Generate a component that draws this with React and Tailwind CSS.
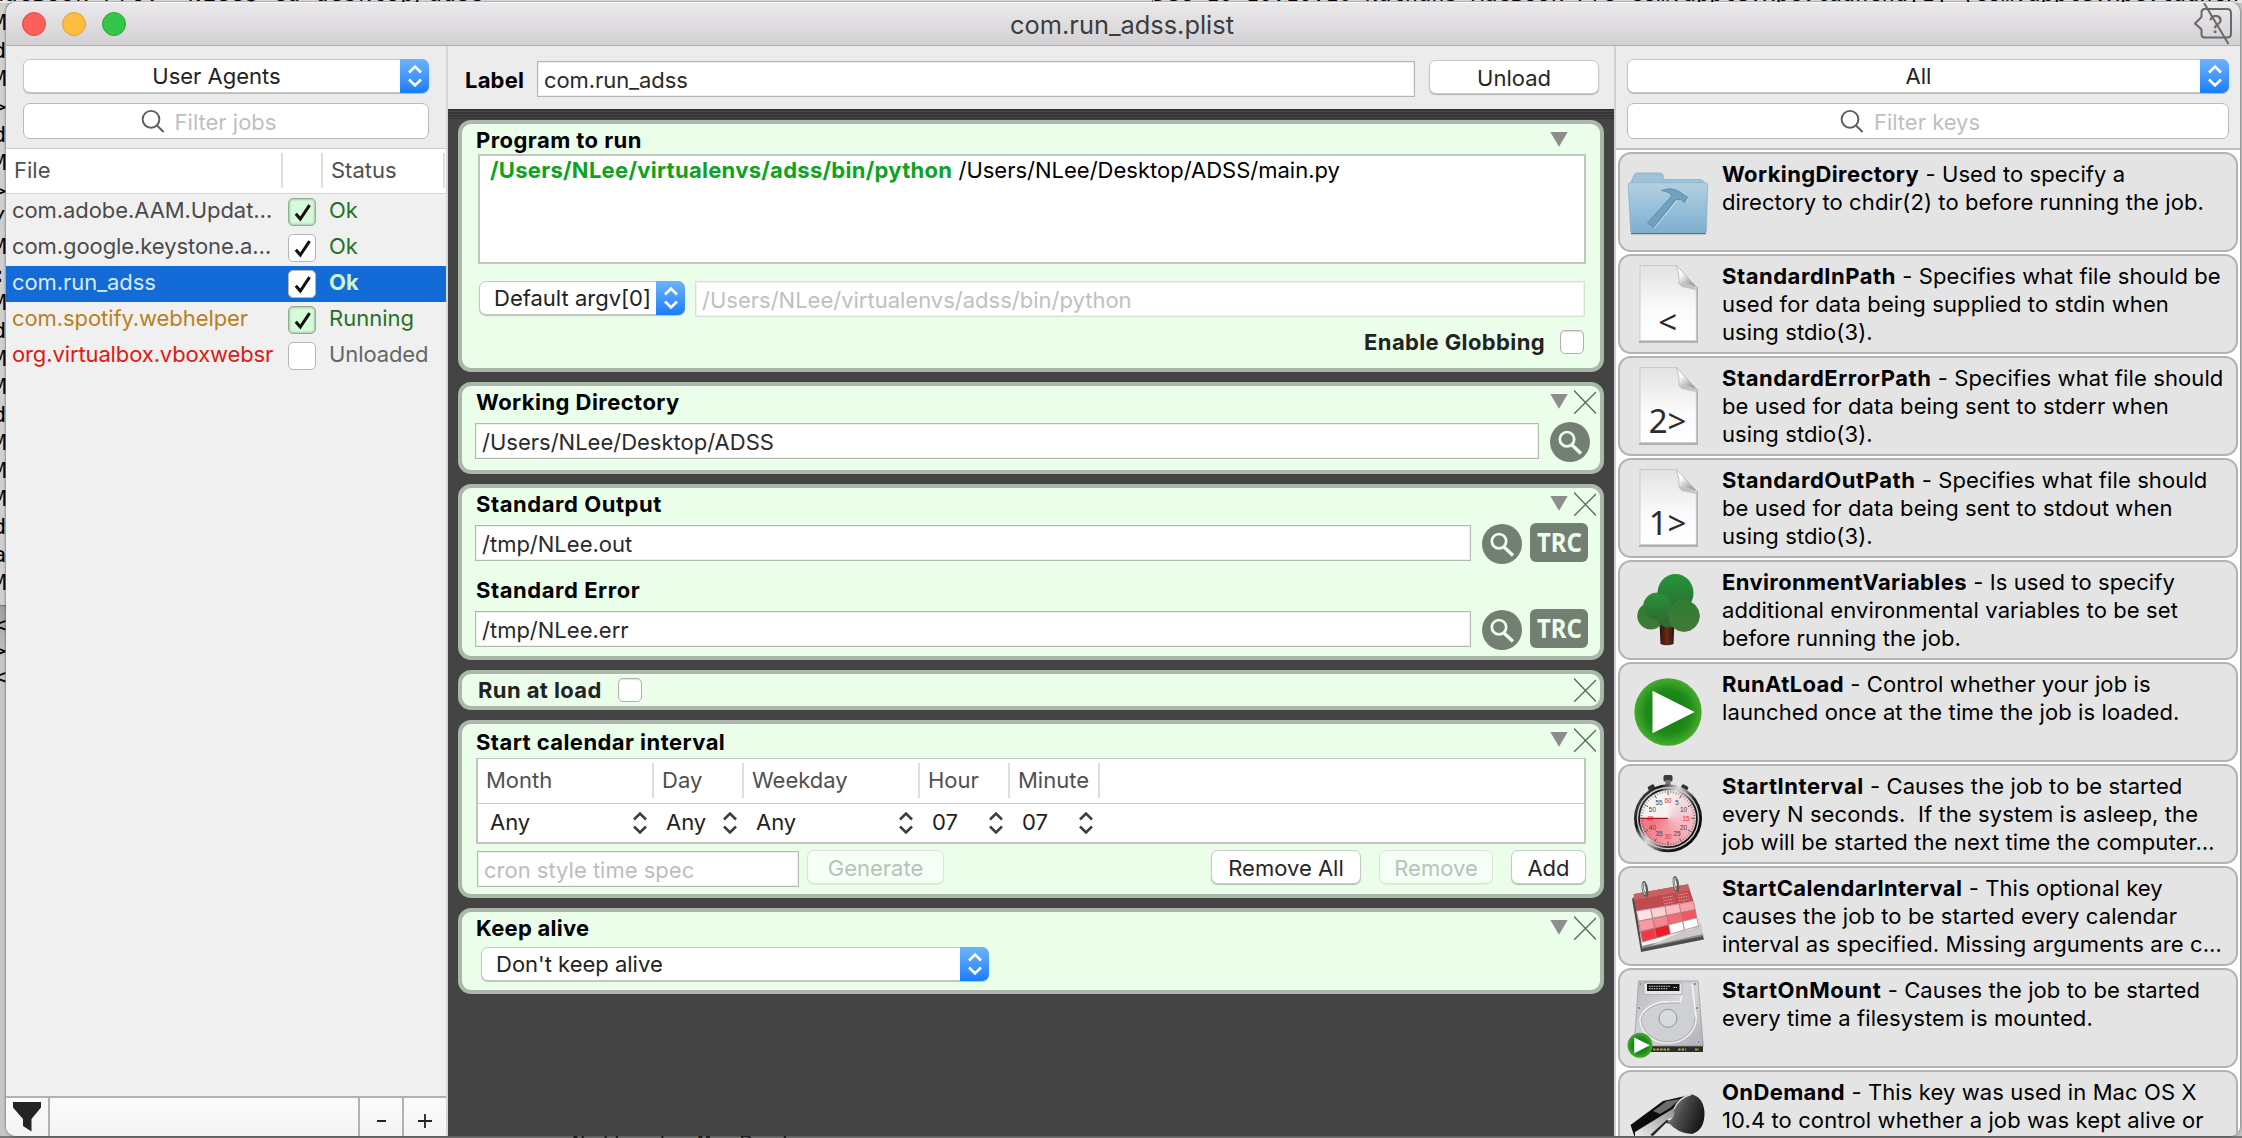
const LEFT_LOG = ['M', 'd', 'M', '>', 'd', 'M', '>', '/', 'M', ':', 'M', 'd', 'M', 'M', 'd', 'M', 'M', 'M', 'd', 'a', 'M', '<', '>', '<'];

const JOBS = [
  { file: 'com.adobe.AAM.Updat…', color: 'text-[#4b4b4b] tracking-[-0.08px]', box: 'green', status: 'Ok', statusColor: 'text-[#1f731f]' },
  { file: 'com.google.keystone.a…', color: 'text-[#4b4b4b] tracking-[-0.08px]', box: 'white', status: 'Ok', statusColor: 'text-[#1f731f]' },
  { file: 'com.run_adss', color: 'text-[#dbe9fa] tracking-[-0.08px]', box: 'white', status: 'Ok', statusColor: 'text-[#cdf5d8] font-bold', selected: true },
  { file: 'com.spotify.webhelper', color: 'text-[#b8801f] tracking-[-0.08px]', box: 'green', status: 'Running', statusColor: 'text-[#1f731f]' },
  { file: 'org.virtualbox.vboxwebsr', color: 'text-[#dd1a12] tracking-[-0.12px]', box: 'empty', status: 'Unloaded', statusColor: 'text-[#666666] tracking-[-0.1px]' },
];

const KEYS = [
  { name: 'WorkingDirectory', icon: 'folder', lines: ['Used to specify a', 'directory to chdir(2) to before running the job.'] },
  { name: 'StandardInPath', icon: 'in', wide: true, lines: ['Specifies what file should be', 'used for data being supplied to stdin when', 'using stdio(3).'] },
  { name: 'StandardErrorPath', icon: 'err', wide: true, lines: ['Specifies what file should', 'be used for data being sent to stderr when', 'using stdio(3).'] },
  { name: 'StandardOutPath', icon: 'out', wide: true, lines: ['Specifies what file should', 'be used for data being sent to stdout when', 'using stdio(3).'] },
  { name: 'EnvironmentVariables', icon: 'tree', lines: ['Is used to specify', 'additional environmental variables to be set', 'before running the job.'] },
  { name: 'RunAtLoad', icon: 'play', lines: ['Control whether your job is', 'launched once at the time the job is loaded.'] },
  { name: 'StartInterval', icon: 'watch', wide: true, lines: ['Causes the job to be started', 'every N seconds.\u00a0 If the system is asleep, the', 'job will be started the next time the computer…'] },
  { name: 'StartCalendarInterval', icon: 'calendar', lines: ['This optional key', 'causes the job to be started every calendar', 'interval as specified. Missing arguments are c…'] },
  { name: 'StartOnMount', icon: 'disk', wide: true, lines: ['Causes the job to be started', 'every time a filesystem is mounted.'] },
  { name: 'OnDemand', icon: 'whistle', lines: ['This key was used in Mac OS X', '10.4 to control whether a job was kept alive or'] },
];

function Arrows({ stroke = '#fff', className = 'w-5 h-[26px]' }) {
  return (
    <svg viewBox="0 0 20 26" className={className} fill="none" stroke={stroke} strokeWidth="2.6">
      <path d="M4 9.5 L10 3.5 L16 9.5 M4 16.5 L10 22.5 L16 16.5" />
    </svg>
  );
}

function Select({ label, className = '', align = 'center', cap = 'w-[29px]' }) {
  return (
    <div className={`flex h-[34px] rounded-[7px] bg-white border border-[#c3c8c3] shadow-[0_1px_1px_rgba(0,0,0,0.22)] ${className}`}>
      <div className={`flex-1 leading-8 whitespace-nowrap ${align === 'center' ? 'text-center pl-2' : 'pl-[14px]'}`}>{label}</div>
      <div className={`-m-px shrink-0 flex items-center justify-center rounded-r-[7px] bg-linear-to-b from-[#6cb3fa] to-[#167dfc] ${cap}`}>
        <Arrows />
      </div>
    </div>
  );
}

function Search({ label, className }) {
  return (
    <div className={`flex items-center justify-center h-9 rounded-[7px] bg-white border border-[#b9b9b9] text-[#bfbfbf] ${className}`}>
      <svg viewBox="0 0 24 24" className="w-6 h-6 mr-2.5" fill="none" stroke="#5c5c5c" strokeWidth="1.9">
        <circle cx="10" cy="10.3" r="8.4" />
        <path d="M16 16.5 L22.6 23" />
      </svg>
      <span className="leading-7 pt-0.5">{label}</span>
    </div>
  );
}

function Field({ value, className = '' }) {
  return (
    <div className={`h-9 shrink-0 bg-white border border-[#b1bcb1] pl-1.5 leading-9 whitespace-nowrap text-[#2a2a2a] shadow-[inset_0_0_0_1px_#f0f0f0] ${className}`}>
      {value}
    </div>
  );
}

function Button({ label, disabled, className }) {
  return (
    <div
      className={`h-[34px] rounded-[7px] border text-center leading-[34px] whitespace-nowrap ${
        disabled
          ? 'bg-[#f5fff5] border-[#d8e4d8] text-[#b9c2b9] shadow-[0_1px_0_rgba(0,0,0,0.06)]'
          : 'bg-white border-[#c6cac6] text-[#262626] shadow-[0_1px_1px_rgba(0,0,0,0.25)]'
      } ${className}`}
    >
      {label}
    </div>
  );
}

function Checkbox() {
  return <div className="w-6 h-6 shrink-0 rounded-[5px] bg-white border border-[#b0b0b0] shadow-[inset_0_1px_1px_rgba(0,0,0,0.12)]" />;
}

function JobCheckbox({ kind }) {
  return (
    <div
      className={`w-7 h-7 rounded-[5px] border ${
        kind === 'green'
          ? 'bg-[#d6fbd8] border-[#8fae92] shadow-[inset_0_0_2px_1px_#a9c8ab]'
          : 'bg-white border-[#b5b5b5]'
      }`}
    >
      {kind !== 'empty' && (
        <svg viewBox="0 0 26 26" className="w-[26px] h-[26px]" fill="none" stroke="#111" strokeWidth="3">
          <path d="M6.8 14.8 L11.3 20 L20.6 6.2" />
        </svg>
      )}
    </div>
  );
}

function CardControls({ disclosure = true, close = true }) {
  return (
    <div className="ml-auto mr-1 pt-1 flex gap-[6px]">
      {disclosure && (
        <svg viewBox="0 0 18 24" className="w-[18px] h-6">
          <path d="M0.3 4 H17.7 L9 18.8 Z" fill="#8d8d8d" />
        </svg>
      )}
      <svg viewBox="0 0 22 24" className={`w-[22px] h-6 ${close ? '' : 'invisible'}`} fill="none" stroke="#5c665c" strokeWidth="1.3">
        <path d="M0 0.5 L22 23.5 M22 2 L0 24" />
      </svg>
    </div>
  );
}

function Card({ title, height, tall, close, children, tracking = 'tracking-[0.44px]' }) {
  return (
    <section className={`shrink-0 bg-[#eafeea] border-4 border-[#acb7ac] rounded-[13px] ${height}`}>
      {title && (
        <header className={`flex ${tall ? 'h-[34px]' : 'h-[30px]'}`}>
          <h2 className={`ml-3.5 font-bold leading-7 text-black ${tall ? 'mt-1' : 'mt-0.5'} ${tracking}`}>{title}</h2>
          <CardControls close={close} />
        </header>
      )}
      {children}
    </section>
  );
}

function RevealButton() {
  return (
    <svg viewBox="0 0 40 40" className="w-10 h-10 shrink-0 -mt-[1px]" fill="none">
      <circle cx="20" cy="20" r="20" fill="#747f74" />
      <circle cx="17" cy="17.2" r="7.2" stroke="#eafeea" strokeWidth="2.7" />
      <path d="M21.5 22.5 L31 31.5" stroke="#eafeea" strokeWidth="3.4" />
    </svg>
  );
}

function TruncateButton() {
  return (
    <div className="w-[58px] h-[39px] ml-2 -mt-[2px] shrink-0 rounded-[6px] bg-[#747f74] flex items-center justify-center">
      <span className="font-['Noto_Sans',sans-serif] font-bold text-[26px] leading-[39px] text-[#eafeea] scale-x-[0.92]">TRC</span>
    </div>
  );
}

function PageIcon({ label, baseline, id }) {
  return (
    <g>
      <defs>
        <linearGradient id={`${id}-page`} x1="0" y1="0" x2="0" y2="1">
          <stop offset="0" stopColor="#e2e2e2" />
          <stop offset="0.6" stopColor="#fbfbfb" />
          <stop offset="1" stopColor="#ffffff" />
        </linearGradient>
        <linearGradient id={`${id}-fold`} x1="0" y1="0.1" x2="0.8" y2="1">
          <stop offset="0.3" stopColor="#ffffff" />
          <stop offset="1" stopColor="#8d8d8d" />
        </linearGradient>
      </defs>
      <path d="M19 86 H77 V31" fill="none" stroke="#a4a4a4" strokeWidth="2" opacity="0.8" />
      <path d="M20 9.5 H56.5 L76.3 31 V84.5 H20 Z" fill={`url(#${id}-page)`} stroke="#c4c4c4" strokeWidth="0.8" />
      <path d="M59 28 H74 L76 34 L62 31 Z" fill="#a5a5a5" opacity="0.6" />
      <path d="M56.5 9.5 Q60 18 59 27.5 Q69 26 76.3 31 Z" fill={`url(#${id}-fold)`} stroke="#aaa" strokeWidth="0.6" />
      <text x="47.6" y={baseline} textAnchor="middle" fontFamily="Noto Sans, sans-serif" fontSize="33" fill="#2b2b2b">{label}</text>
    </g>
  );
}

function PlayBadge({ cx, cy, r, id }) {
  return (
    <g>
      <defs>
        <radialGradient id={id}>
          <stop offset="0" stopColor="#127a12" />
          <stop offset="0.65" stopColor="#1e8a1a" />
          <stop offset="1" stopColor="#44ac2c" />
        </radialGradient>
      </defs>
      <circle cx={cx} cy={cy} r={r} fill={`url(#${id})`} />
      <path d={`M${cx - r * 0.46} ${cy - r * 0.63} L${cx + r * 0.79} ${cy} L${cx - r * 0.46} ${cy + r * 0.63} Z`} fill="#fff" />
    </g>
  );
}

function polar(cx, cy, r, deg) {
  const a = ((deg - 90) * Math.PI) / 180;
  return [cx + r * Math.cos(a), cy + r * Math.sin(a)];
}

function StopwatchIcon() {
  const cx = 48;
  const cy = 52.3;
  const wedges = Array.from({ length: 27 }, (_, i) => {
    const [x1, y1] = polar(cx, cy, 27.5, i * 10);
    const [x2, y2] = polar(cx, cy, 27.5, i * 10 + 10.2);
    return <path key={i} d={`M${cx} ${cy} L${x1} ${y1} A27.5 27.5 0 0 1 ${x2} ${y2} Z`} fill="#ef3f52" opacity={0.04 + (i / 27) * 0.7} />;
  });
  const ticks = Array.from({ length: 60 }, (_, i) => {
    const [x1, y1] = polar(cx, cy, 27.5, i * 6);
    const [x2, y2] = polar(cx, cy, i % 5 ? 25.2 : 23.2, i * 6);
    return <path key={i} d={`M${x1} ${y1} L${x2} ${y2}`} stroke="#444" strokeWidth={i % 5 ? 0.5 : 0.9} />;
  });
  return (
    <g>
      <defs>
        <linearGradient id="watch-rim" x1="0" y1="0" x2="1" y2="0.6">
          <stop offset="0" stopColor="#e8e8e8" />
          <stop offset="0.1" stopColor="#555" />
          <stop offset="0.3" stopColor="#111" />
          <stop offset="0.5" stopColor="#e0e0e0" />
          <stop offset="0.75" stopColor="#222" />
          <stop offset="1" stopColor="#0a0a0a" />
        </linearGradient>
      </defs>
      <rect x="43.5" y="9" width="9" height="6.5" rx="1.5" fill="#3c3c3c" />
      <rect x="45.5" y="14" width="5" height="6" fill="#777" />
      <rect x="28" y="19.5" width="7" height="5" rx="1.5" fill="#333" transform="rotate(-28 31 22)" />
      <rect x="61" y="19.5" width="7" height="5" rx="1.5" fill="#333" transform="rotate(28 65 22)" />
      <circle cx={cx} cy={cy} r="34" fill="url(#watch-rim)" />
      <circle cx={cx} cy={cy} r="30.5" fill="none" stroke="#c9c9c9" strokeWidth="1.4" />
      <circle cx={cx} cy={cy} r="28" fill="#f6f2f2" />
      {wedges}
      {ticks}
      {['60', '5', '10', '15', '20', '25', '30', '35', '40', '45', '50', '55'].map((n, i) => {
        const [x, y] = polar(cx, cy, 18, i * 30);
        return (
          <text key={n} x={x} y={y + 2.3} textAnchor="middle" fontFamily="Liberation Sans, sans-serif" fontSize="6.4" fill={i % 3 ? '#444' : '#e2303f'}>{n}</text>
        );
      })}
      <path d="M19.5 52.3 H48" stroke="#b3121f" strokeWidth="1.3" />
    </g>
  );
}

const CAL_CORNERS = [[16.5, 43], [73.5, 33.5], [78.5, 58], [22.5, 74]];
const CAL_FILLS = [
  ['#fde3e5', '#fcd0d3', '#f9bcc1', '#f8a3aa'],
  ['#f79aa2', '#f3868f', '#f06d78', '#ee5763'],
  ['#ee3a48', '#e91c2a', '#ffffff', '#ffffff'],
];

function calPoint(u, v) {
  const [a, b, c, d] = CAL_CORNERS;
  return [0, 1].map((k) => (a[k] * (1 - u) + b[k] * u) * (1 - v) + (d[k] * (1 - u) + c[k] * u) * v).join(',');
}

function CalendarIcon() {
  return (
    <g>
      <path d="M14 29 L12 31 L21 84 L84 71.5 L82.5 66 L24 78 Z" fill="#4d4d4d" />
      <path d="M14 26 L68 16.3 L83.5 68 L22 80.5 Z" fill="#8b8b8b" />
      <path d="M14.5 27 L69 17 L82 64 L22 78 Z" fill="#f2f2f2" />
      <path d="M62 63 Q74 62 81 55 L83 66 L30 78 Z" fill="#c9c9c9" />
      <path d="M13.6 26.3 L68 16.3 L73.5 33 L16.3 43 Z" fill="#c04a4f" />
      <path d="M13.6 26.3 L68 16.3 L70 22 L14.6 32 Z" fill="#d0666b" opacity="0.7" />
      {CAL_FILLS.map((row, r) =>
        row.map((fill, c) => (
          <polygon
            key={`${r}-${c}`}
            points={[calPoint(c / 4, r / 3), calPoint((c + 1) / 4, r / 3), calPoint((c + 1) / 4, (r + 1) / 3), calPoint(c / 4, (r + 1) / 3)].join(' ')}
            fill={fill}
            stroke="#b07a7d"
            strokeWidth="0.8"
          />
        ))
      )}
      <path d="M43 30 l10 -2 M43.5 33 l10 -2 M44 36 l10 -2 M58 27 l10 -2 M58.5 30 l10 -2 M59 33 l10 -2" stroke="#e9a5a8" strokeWidth="1" strokeDasharray="1.4 1" />
      {[[25, 14], [56, 9]].map(([x, y]) => (
        <g key={x} fill="none">
          <path d={`M${x} ${y + 14} C${x - 4} ${y + 4} ${x - 2} ${y - 2} ${x} ${y + 1} C${x + 2} ${y + 4} ${x + 3} ${y + 12} ${x + 1.5} ${y + 15}`} stroke="#5a5a5a" strokeWidth="2.2" />
          <path d={`M${x} ${y + 13} C${x - 4} ${y + 4} ${x - 2} ${y - 1} ${x} ${y + 2}`} stroke="#d8d8d8" strokeWidth="1" />
        </g>
      ))}
    </g>
  );
}

function DiskIcon() {
  return (
    <g>
      <defs>
        <linearGradient id="disk-case" x1="0" y1="0" x2="1" y2="1">
          <stop offset="0" stopColor="#b6b7bb" />
          <stop offset="0.5" stopColor="#d6d7da" />
          <stop offset="1" stopColor="#aeafb4" />
        </linearGradient>
      </defs>
      <path d="M14.5 76 H83 V82 H15 Z" fill="#2c2c2c" />
      <path d="M33 79.5 H50 M58 79.5 H66 M75 79.5 H79" stroke="#b5a52f" strokeWidth="1.8" strokeDasharray="2.5 1" />
      <path d="M18.5 11 H78 L83.3 76 H14.2 Z" fill="url(#disk-case)" stroke="#96979b" strokeWidth="0.7" />
      <path d="M24 13 H62 V24.5 H24 Z" fill="#e6e6e8" stroke="#9a9a9e" strokeWidth="0.6" />
      <rect x="27" y="14" width="32.5" height="7" fill="#141414" />
      <path d="M29 16.2 H50 M29 18.8 H48 M53.5 17.5 H57" stroke="#d0d0d0" strokeWidth="1.1" strokeDasharray="1.6 0.8" />
      <path d="M62 26 L60 32 H50 A28 22 0 0 0 20 49 A28 25 0 0 0 48 73 A28 25 0 0 0 76 46 L72 14" fill="#cfd0d4" stroke="#f4f4f6" strokeWidth="1.6" />
      <path d="M60 33 H50 A27 21 0 0 0 21 49 A27 24 0 0 0 48 72 A27 24 0 0 0 75 47" fill="none" stroke="#9a9ba0" strokeWidth="0.7" />
      <circle cx="48" cy="48.3" r="9" fill="#d9dade" stroke="#8a8b90" strokeWidth="0.9" />
      {[[20.5, 14], [75, 14], [19, 38], [77, 38], [78.5, 72]].map(([x, y]) => (
        <circle key={`${x}-${y}`} cx={x} cy={y} r="1.6" fill="#87888c" stroke="#eee" strokeWidth="0.5" />
      ))}
      <PlayBadge cx={20} cy={75.3} r={12.5} id="disk-badge" />
    </g>
  );
}

function WhistleIcon() {
  return (
    <g>
      <defs>
        <linearGradient id="whistle-side" x1="0" y1="0" x2="1" y2="0.4">
          <stop offset="0" stopColor="#9c9c9c" />
          <stop offset="0.5" stopColor="#4a4a4a" />
          <stop offset="1" stopColor="#1a1a1a" />
        </linearGradient>
        <linearGradient id="whistle-pipe" x1="0" y1="1" x2="1" y2="0">
          <stop offset="0" stopColor="#f0f0f0" />
          <stop offset="1" stopColor="#8c8c8c" />
        </linearGradient>
      </defs>
      <path d="M10.5 53 L43 29 L72 22.5 L54 38 L15 66 Z" fill="#0b0b0b" />
      <path d="M33 39 L47 29 L60 27 L50 36 L40 42 Z" fill="#6b6b6b" />
      <path d="M15 60 L54 36 L58 45 Q51 45 46 48 L26 66 H15 Z" fill="url(#whistle-pipe)" />
      <path d="M30 63 L47 47.5 L52 52 L46 51 L33 64 Z" fill="#2a2a2a" />
      <path d="M54 38 Q60 24 71 22.5 Q83 24 84.5 40 Q85 58 72 62 Q58 62 47 49 Q56 47 54 38 Z" fill="url(#whistle-side)" />
      <path d="M71 22.5 Q58 26 54 37" fill="none" stroke="#dddddd" strokeWidth="1.3" />
    </g>
  );
}

function KeyIcon({ kind }) {
  let art = null;
  if (kind === 'folder') {
    art = (
      <g>
        <defs>
          <linearGradient id="folder-front" x1="0" y1="0" x2="0" y2="1">
            <stop offset="0" stopColor="#b4d0e2" />
            <stop offset="1" stopColor="#7dafd0" />
          </linearGradient>
        </defs>
        <path d="M11 79.3 H86" stroke="#55707f" strokeWidth="1.8" />
        <path d="M10 33 L12 26 L14 21 Q14.6 19 17 19 H40 Q42.5 19 43 21 L44 25.5 H80 Q83 25.5 84 28 L86.5 33 Z" fill="#9cc3da" stroke="#84abc4" strokeWidth="0.7" />
        <path d="M8.2 31 Q8.2 28.6 10.6 28.6 H85.2 Q87.6 28.6 87.6 31 L86.4 77 Q86.3 78.7 84.5 78.7 H12.5 Q10.8 78.7 10.7 77 Z" fill="url(#folder-front)" stroke="#82adc7" strokeWidth="0.7" />
        <path d="M41.5 36.5 Q53 32 62 39.5 L68 43.5 L65.5 49 L60.5 45.5 L56 45.5 L34 73.5 L27.5 69 L51.5 42 Q51 38.5 41.5 36.5 Z" fill="#719fbe" stroke="#5d8dad" strokeWidth="0.9" />
        <path d="M68.3 44 L65.7 49.6 M57 46.6 L34.2 74.3" stroke="#cfe3ef" strokeWidth="1" />
      </g>
    );
  } else if (kind === 'in') art = <PageIcon id="in" label="<" baseline={77.5} />;
  else if (kind === 'err') art = <PageIcon id="err" label="2>" baseline={75} />;
  else if (kind === 'out') art = <PageIcon id="out" label="1>" baseline={75} />;
  else if (kind === 'tree') {
    art = (
      <g>
        <defs>
          <linearGradient id="leaf" x1="0" y1="0" x2="0" y2="1">
            <stop offset="0" stopColor="#24963a" />
            <stop offset="1" stopColor="#2f6a30" />
          </linearGradient>
          <linearGradient id="leaf-low" x1="0" y1="0" x2="0" y2="1">
            <stop offset="0" stopColor="#2d7d2f" />
            <stop offset="1" stopColor="#43793a" />
          </linearGradient>
          <linearGradient id="trunk" x1="0" y1="0" x2="1" y2="0">
            <stop offset="0" stopColor="#2a130a" />
            <stop offset="0.5" stopColor="#6a2c12" />
            <stop offset="1" stopColor="#2c140b" />
          </linearGradient>
        </defs>
        <path d="M39.5 60 H54.5 L53.5 82 Q47 84.5 40.5 82 Z" fill="url(#trunk)" />
        <circle cx="30.8" cy="54" r="13.5" fill="url(#leaf-low)" />
        <circle cx="49" cy="51" r="14.5" fill="#2c6d31" />
        <ellipse cx="55.5" cy="31" rx="18" ry="19" fill="url(#leaf)" />
        <circle cx="37" cy="44.5" r="13.6" fill="url(#leaf)" stroke="#3d7a3a" strokeWidth="0.8" />
        <circle cx="64" cy="54" r="15.4" fill="url(#leaf-low)" stroke="#4b7a3c" strokeWidth="0.8" />
      </g>
    );
  } else if (kind === 'play') art = <PlayBadge cx={48} cy={48} r={33.7} id="run-badge" />;
  else if (kind === 'watch') art = <StopwatchIcon />;
  else if (kind === 'calendar') art = <CalendarIcon />;
  else if (kind === 'disk') art = <DiskIcon />;
  else art = <WhistleIcon />;
  return <svg viewBox="0 0 102 96" className="w-[102px] h-24 shrink-0">{art}</svg>;
}

function KeyCard({ name, icon, wide, lines }) {
  return (
    <article className="flex shrink-0 h-[100px] rounded-[13px] bg-[#e4e4e4] border-2 border-[#b2b2b2] overflow-hidden">
      <KeyIcon kind={icon} />
      <p className="pt-1.5 leading-7 whitespace-nowrap text-black tracking-[0.1px]">
        <span className={`font-bold ${wide ? 'tracking-[0.54px]' : 'tracking-[0.38px]'}`}>{name}</span> - {lines[0]}
        {lines.slice(1).map((line) => (
          <span key={line} className="block">{line}</span>
        ))}
      </p>
    </article>
  );
}

const COLUMNS = [
  { label: 'Month', value: 'Any', width: 'w-44' },
  { label: 'Day', value: 'Any', width: 'w-[90px]' },
  { label: 'Weekday', value: 'Any', width: 'w-44' },
  { label: 'Hour', value: '07', width: 'w-[90px]' },
  { label: 'Minute', value: '07', width: 'w-[90px]' },
];

function Sidebar() {
  return (
    <aside className="w-[440px] flex flex-col bg-[#f0f0f0]">
      <div className="h-[103px] bg-[#ececec] border-b border-[#cfcfcf] pt-[13px] px-[17px]">
        <Select label="User Agents" />
        <Search label="Filter jobs" className="mt-2.5 pr-[35px]" />
      </div>
      <div className="h-[45px] bg-white border-b border-[#d5d5d5] flex text-[#505050] leading-[42px]">
        <div className="w-[275px] pl-2">File</div>
        <div className="w-0.5 h-[35px] mt-1 bg-[#dedede]" />
        <div className="w-[38px]" />
        <div className="w-0.5 h-[35px] mt-1 bg-[#dedede]" />
        <div className="w-[120px] pl-2">Status</div>
        <div className="w-0.5 h-[35px] mt-1 bg-[#dedede]" />
      </div>
      <div className="flex-1">
        {JOBS.map((job) => (
          <div key={job.file} className={`h-9 flex items-center ${job.selected ? 'bg-[#126bd7]' : ''}`}>
            <div className={`w-[282px] pl-1.5 leading-8 pb-1 whitespace-nowrap ${job.color}`}>{job.file}</div>
            <JobCheckbox kind={job.box} />
            <div className={`pl-[13px] leading-8 pb-1 ${job.statusColor}`}>{job.status}</div>
          </div>
        ))}
      </div>
      <div className="h-10 border-t-2 border-[#b2b2b2] bg-linear-to-b from-[#fbfbfb] to-[#f4f4f4] flex">
        <div className="w-[42px] pl-[7px] pt-1">
          <svg viewBox="0 0 28 30" className="w-7 h-[30px]">
            <path d="M0 0 H28 V5.5 L18.5 17 V29.5 L10 24 V17 L0 5.5 Z" fill="#242424" />
          </svg>
        </div>
        <div className="w-0.5 bg-[#b2b2b2]" />
        <div className="flex-1" />
        <div className="w-0.5 bg-[#b2b2b2]" />
        <div className="w-[42px] flex items-center justify-center pt-2">
          <div className="w-[9px] h-0.5 bg-[#222]" />
        </div>
        <div className="w-0.5 bg-[#b2b2b2]" />
        <div className="w-[42px] flex items-center justify-center pt-2">
          <svg viewBox="0 0 14 14" className="w-3.5 h-3.5" stroke="#222" strokeWidth="1.8">
            <path d="M0 7 H14 M7 0 V14" />
          </svg>
        </div>
      </div>
    </aside>
  );
}

function Editor() {
  return (
    <main className="w-[1166px] flex flex-col">
      <div className="h-[63px] flex bg-[#ececec]">
        <span className="w-[89px] pl-[17px] pt-5 leading-7 font-bold text-black tracking-[0.2px]">Label</span>
        <Field value="com.run_adss" className="mt-[15px] w-[878px] border-[#b4b4b4] tracking-[-0.08px]" />
        <Button label="Unload" className="mt-3.5 ml-3.5 w-[170px]" />
      </div>
      <div className="flex-1 flex flex-col bg-[#444444] px-2.5 pb-4 gap-2.5 pt-[11px] bg-[repeating-linear-gradient(#2f2f2f_0px,#3a3a3a_2px,#4a4a4a_2px,#444444_3px)] bg-size-[100%_10px] bg-no-repeat">
        <Card title="Program to run" height="h-[252px]" close={false}>
          <div className="ml-4 w-[1108px] h-[110px] bg-white border-2 border-[#c1c6c1] pl-2.5 leading-7 text-black whitespace-nowrap">
            <span className="font-bold text-[#0da31f] tracking-[0.28px]">/Users/NLee/virtualenvs/adss/bin/python</span> /Users/NLee/Desktop/ADSS/main.py
          </div>
          <div className="flex mt-[17px] ml-[17px]">
            <Select label="Default argv[0]" align="left" className="w-[206px]" />
            <Field value="/Users/NLee/virtualenvs/adss/bin/python" className="ml-2.5 w-[890px] text-[#c0c0c0] border-[#d3e2d3]" />
          </div>
          <div className="flex justify-end items-center gap-[15px] mt-[13px] h-6 mr-4">
            <span className="font-bold tracking-[0.38px] text-[#222]">Enable Globbing</span>
            <Checkbox />
          </div>
        </Card>

        <Card title="Working Directory" height="h-[92px]">
          <div className="flex mt-[7px] ml-[13px] gap-[11px]">
            <Field value="/Users/NLee/Desktop/ADSS" className="w-[1064px]" />
            <RevealButton />
          </div>
        </Card>

        <Card title="Standard Output" height="h-[176px]" tracking="tracking-[0.55px]">
          <div className="flex mt-[7px] ml-[13px] h-9">
            <Field value="/tmp/NLee.out" className="w-[996px] mr-[11px]" />
            <RevealButton />
            <TruncateButton />
          </div>
          <h2 className="mt-[15px] ml-3.5 leading-7 font-bold tracking-[0.55px] text-black">Standard Error</h2>
          <div className="flex mt-[7px] ml-[13px] h-9">
            <Field value="/tmp/NLee.err" className="w-[996px] mr-[11px]" />
            <RevealButton />
            <TruncateButton />
          </div>
        </Card>

        <Card height="h-10">
          <div className="flex h-8">
            <span className="ml-4 w-[140px] leading-8 font-bold tracking-[0.4px] text-[#222] whitespace-nowrap">Run at load</span>
            <div className="pt-1">
              <Checkbox />
            </div>
            <CardControls disclosure={false} />
          </div>
        </Card>

        <Card title="Start calendar interval" height="h-[178px]" tall>
          <div className="ml-3.5 w-[1110px] h-[86px] bg-white border-2 border-t border-[#c1c6c1]">
            <div className="h-[45px] flex border-b border-[#cdcdcd] text-[#505050]">
              {COLUMNS.map((c) => (
                <div key={c.label} className={`flex justify-between pl-2 leading-[42px] ${c.width}`}>
                  {c.label}
                  <div className="w-0.5 h-[35px] mt-1 bg-[#dedede]" />
                </div>
              ))}
            </div>
            <div className="h-[38px] flex text-[#222]">
              {COLUMNS.map((c) => (
                <div key={c.label} className={`flex justify-between items-center pl-3 pr-1 leading-[34px] ${c.width}`}>
                  <span className="pb-0.5">{c.value}</span>
                  <Arrows stroke="#3f3f3f" className="w-5 h-[26px]" />
                </div>
              ))}
            </div>
          </div>
          <div className="flex mt-1.5 ml-[15px] mr-3.5">
            <Field value="cron style time spec" className="mt-px w-[322px] text-[#bdbdbd]" />
            <Button label="Generate" disabled className="ml-2 w-[137px]" />
            <Button label="Remove All" className="ml-auto w-[150px]" />
            <Button label="Remove" disabled className="ml-[18px] w-[114px]" />
            <Button label="Add" className="ml-[18px] w-[75px]" />
          </div>
        </Card>

        <Card title="Keep alive" height="h-[86px]" tracking="tracking-[0.25px]">
          <Select label="Don't keep alive" align="left" className="mt-[5px] ml-[19px] w-[508px]" />
        </Card>
      </div>
    </main>
  );
}

function KeyPalette() {
  return (
    <aside className="w-[624px] flex flex-col bg-white">
      <div className="h-[104px] bg-[#ececec] border-b-2 border-[#bdbdbd] pt-[13px] px-[11px]">
        <Select label="All" />
        <Search label="Filter keys" className="mt-2.5 pr-[36px]" />
      </div>
      <div className="flex-1 flex flex-col gap-0.5 pt-0.5 px-0.5 overflow-hidden h-0">
        {KEYS.map((key) => (
          <KeyCard key={key.name} {...key} />
        ))}
      </div>
    </aside>
  );
}

export default function App() {
  return (
    <div className="relative w-[2242px] h-[1138px] overflow-hidden bg-[#c4c4c4] font-['Inter','Liberation_Sans',sans-serif] text-[22px] text-[#222]">
      <div className="absolute inset-0 flex flex-col font-['DejaVu_Sans_Mono',monospace] text-black whitespace-pre" aria-hidden="true">
        <div className="flex h-[3px] bg-[#e6e6e6]">
          <div className="w-[1153px] h-[3px] overflow-hidden border-r border-[#777]">
            <div className="-mt-[18px] -ml-2.5 leading-6 tracking-[0.9px]">MacBook-Pro:~ NLee$ cd desktop/adss</div>
          </div>
          <div className="flex-1 h-[3px] overflow-hidden">
            <div className="-mt-[18px] leading-6">Dec 10 10:10:16 Nathans-MacBook-Pro com.apple.xpc.launchd[1] (com.apple.xpc.launchd</div>
          </div>
        </div>
        <div className="w-1.5 h-[603px] overflow-hidden bg-[#cfcfcf] border-b border-[#777]">
          {LEFT_LOG.slice(0, 21).map((ch, i) => (
            <div key={i} className="h-7 leading-7 -ml-[7px] pt-1.5">{ch}</div>
          ))}
        </div>
        <div className="w-1.5 h-[530px] overflow-hidden bg-linear-to-b from-[#9c9c9c] to-[#c6c6c6] to-10%">
          {LEFT_LOG.slice(21).map((ch, i) => (
            <div key={i} className="h-[26px] leading-[26px] -ml-[7px] pt-1.5">{ch}</div>
          ))}
        </div>
        <div className="h-0.5 overflow-hidden bg-[#777777]">
          <div className="ml-[572px] -mt-1 leading-6 text-[#222] tracking-[0.7px]">Nathan's MacBook</div>
        </div>
      </div>

      <div className="relative ml-1.5 mt-0.5 w-[2234px] h-[1134px] rounded-[10px] overflow-hidden shadow-[0_0_3px_rgba(0,0,0,0.6)] flex flex-col bg-[#ececec]">
        <div className="h-11 shrink-0 flex items-center bg-linear-to-b from-[#ebe9eb] to-[#d2d0d2] border-b border-[#b0aeb0] border-t border-t-[#f6f6f6]">
          <div className="flex gap-4 pl-4 w-[160px]">
            <div className="w-6 h-6 rounded-full bg-[#fc605b] border border-[#e04a45]" />
            <div className="w-6 h-6 rounded-full bg-[#fdbd40] border border-[#dea034]" />
            <div className="w-6 h-6 rounded-full bg-[#34c648] border border-[#27a834]" />
          </div>
          <div className="flex-1 text-center text-[25.4px] leading-8 text-[#3c3c3c] pr-[116px] pt-px">com.run_adss.plist</div>
          <svg viewBox="0 0 38 42" className="w-[38px] h-[42px] mr-2 shrink-0" fill="none" stroke="#6a686a" strokeWidth="2">
            <path d="M10.5 6 H33 Q37 6 37 10 V30.5 Q37 34.5 33 34.5 H11 Q7.5 34.5 7.5 31 V26.5 L1 20.5 L7.5 14 V9.5 Q7.5 6 10.5 6 Z" />
            <text x="21.5" y="29.5" textAnchor="middle" fontFamily="Liberation Sans, sans-serif" fontSize="25" fill="#6a686a" stroke="none">?</text>
            <path d="M10 0 L34.5 41" />
          </svg>
        </div>
        <div className="flex flex-1 h-0">
          <Sidebar />
          <div className="w-0.5 bg-[#d6d6d6]" />
          <Editor />
          <div className="w-0.5 bg-[#d0d0d0]" />
          <KeyPalette />
        </div>
      </div>
    </div>
  );
}
